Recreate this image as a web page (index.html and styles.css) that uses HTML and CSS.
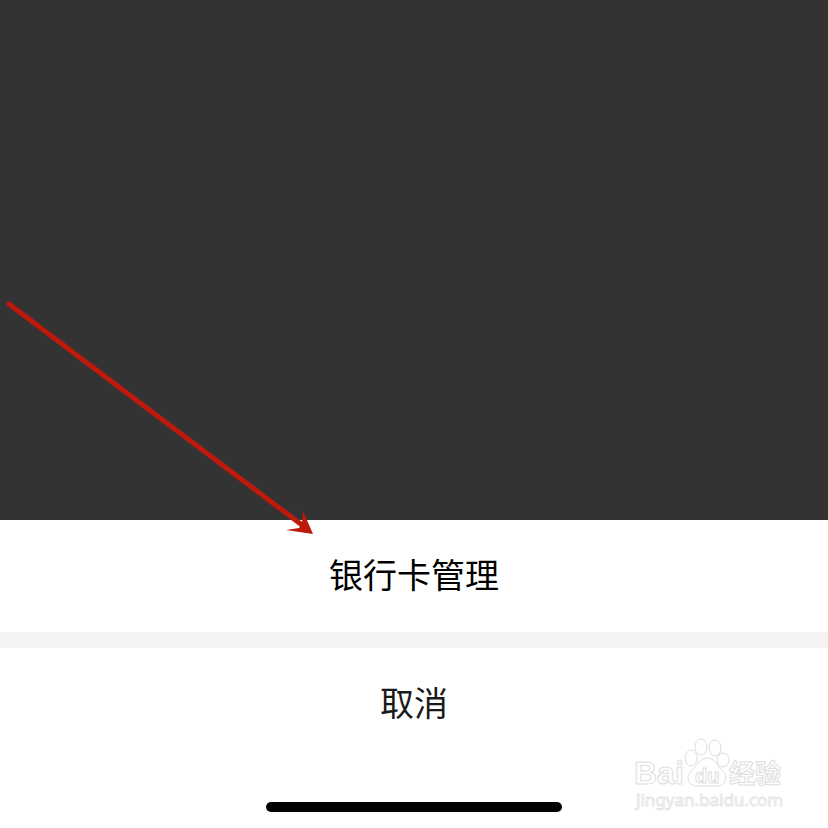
FILE: index.html
```html
<!DOCTYPE html>
<html lang="zh-CN">
<head>
  <meta charset="UTF-8" />
  <meta name="viewport" content="width=device-width, initial-scale=1" />
  <title>银行卡管理</title>
  <link rel="stylesheet" href="styles.css">
</head>
<body>
  <div class="backdrop"></div>

  <main class="sheet">
    <button type="button" class="sheet-btn">银行卡管理</button>
    <div class="divider"></div>
    <button type="button" class="sheet-btn cancel">取消</button>
    <div class="home-area">
      <div class="home-bar"></div>
    </div>
  </main>

  <svg class="arrow" width="320" height="250" viewBox="0 290 320 250" aria-hidden="true">
    <path d="M9 304 L302 525" />
    <polygon points="313,534 303,511 302,523 299,528 286,530" />
  </svg>

  <svg class="watermark" width="160" height="78" viewBox="630 736 160 78" aria-hidden="true">
    <text class="logo-text" x="634" y="784" font-size="32">Bai</text>
    <ellipse cx="691" cy="758" rx="6" ry="8" />
    <ellipse cx="701" cy="747" rx="6" ry="8" />
    <ellipse cx="715" cy="748" rx="6" ry="8" />
    <ellipse cx="723" cy="760" rx="6" ry="7" />
    <path d="M707 758 C701 758 698 763 695 767 C691 771 688 773 688 778 C688 783 692 786 698 786 L717 786 C723 786 726 782 726 777 C726 773 722 771 719 767 C716 762 713 758 707 758 Z" />
    <text class="logo-text" x="695" y="783" font-size="20">du</text>
    <text class="logo-cn" x="729" y="783" font-size="26">经验</text>
    <text class="site" x="636" y="806" font-size="17">jingyan.baidu.com</text>
  </svg>
</body>
</html>
```

FILE: styles.css
```css
body {
  margin: 0;
  min-height: 100vh;
  display: flex;
  flex-direction: column;
  position: relative;
  background: #fff;
  font-family: "Liberation Sans", "Noto Sans CJK SC", sans-serif;
}
.backdrop {
  flex: 1;
  background: #333;
}
.sheet {
  display: flex;
  flex-direction: column;
}
.sheet-btn {
  height: 112px;
  padding: 0;
  border: none;
  background: #fff;
  color: #000;
  font-family: inherit;
  font-size: 34px;
  line-height: 48px;
  cursor: pointer;
}
.cancel {
  color: #1a1a1a;
}
.divider {
  height: 16px;
  background: #f3f3f3;
}
.home-area {
  display: flex;
  justify-content: center;
  align-items: flex-end;
  height: 52px;
  padding-bottom: 16px;
}
.home-bar {
  width: 296px;
  height: 10px;
  border-radius: 5px;
  background: #000;
}
.arrow {
  position: absolute;
  left: 0;
  bottom: 288px;
}
.arrow path {
  fill: none;
  stroke: #be1a0c;
  stroke-width: 5;
  stroke-linecap: round;
}
.arrow polygon {
  fill: #be1a0c;
}
.watermark {
  position: absolute;
  right: 38px;
  bottom: 14px;
  fill: #fff;
  stroke: #dedede;
  stroke-width: 1;
  pointer-events: none;
}
.logo-text {
  font-family: "Liberation Sans", sans-serif;
  font-weight: 700;
}
.logo-cn {
  font-family: "Noto Sans CJK SC", sans-serif;
  font-weight: 700;
}
.site {
  font-family: "Noto Sans", sans-serif;
  stroke: #e6e6e6;
}
```
